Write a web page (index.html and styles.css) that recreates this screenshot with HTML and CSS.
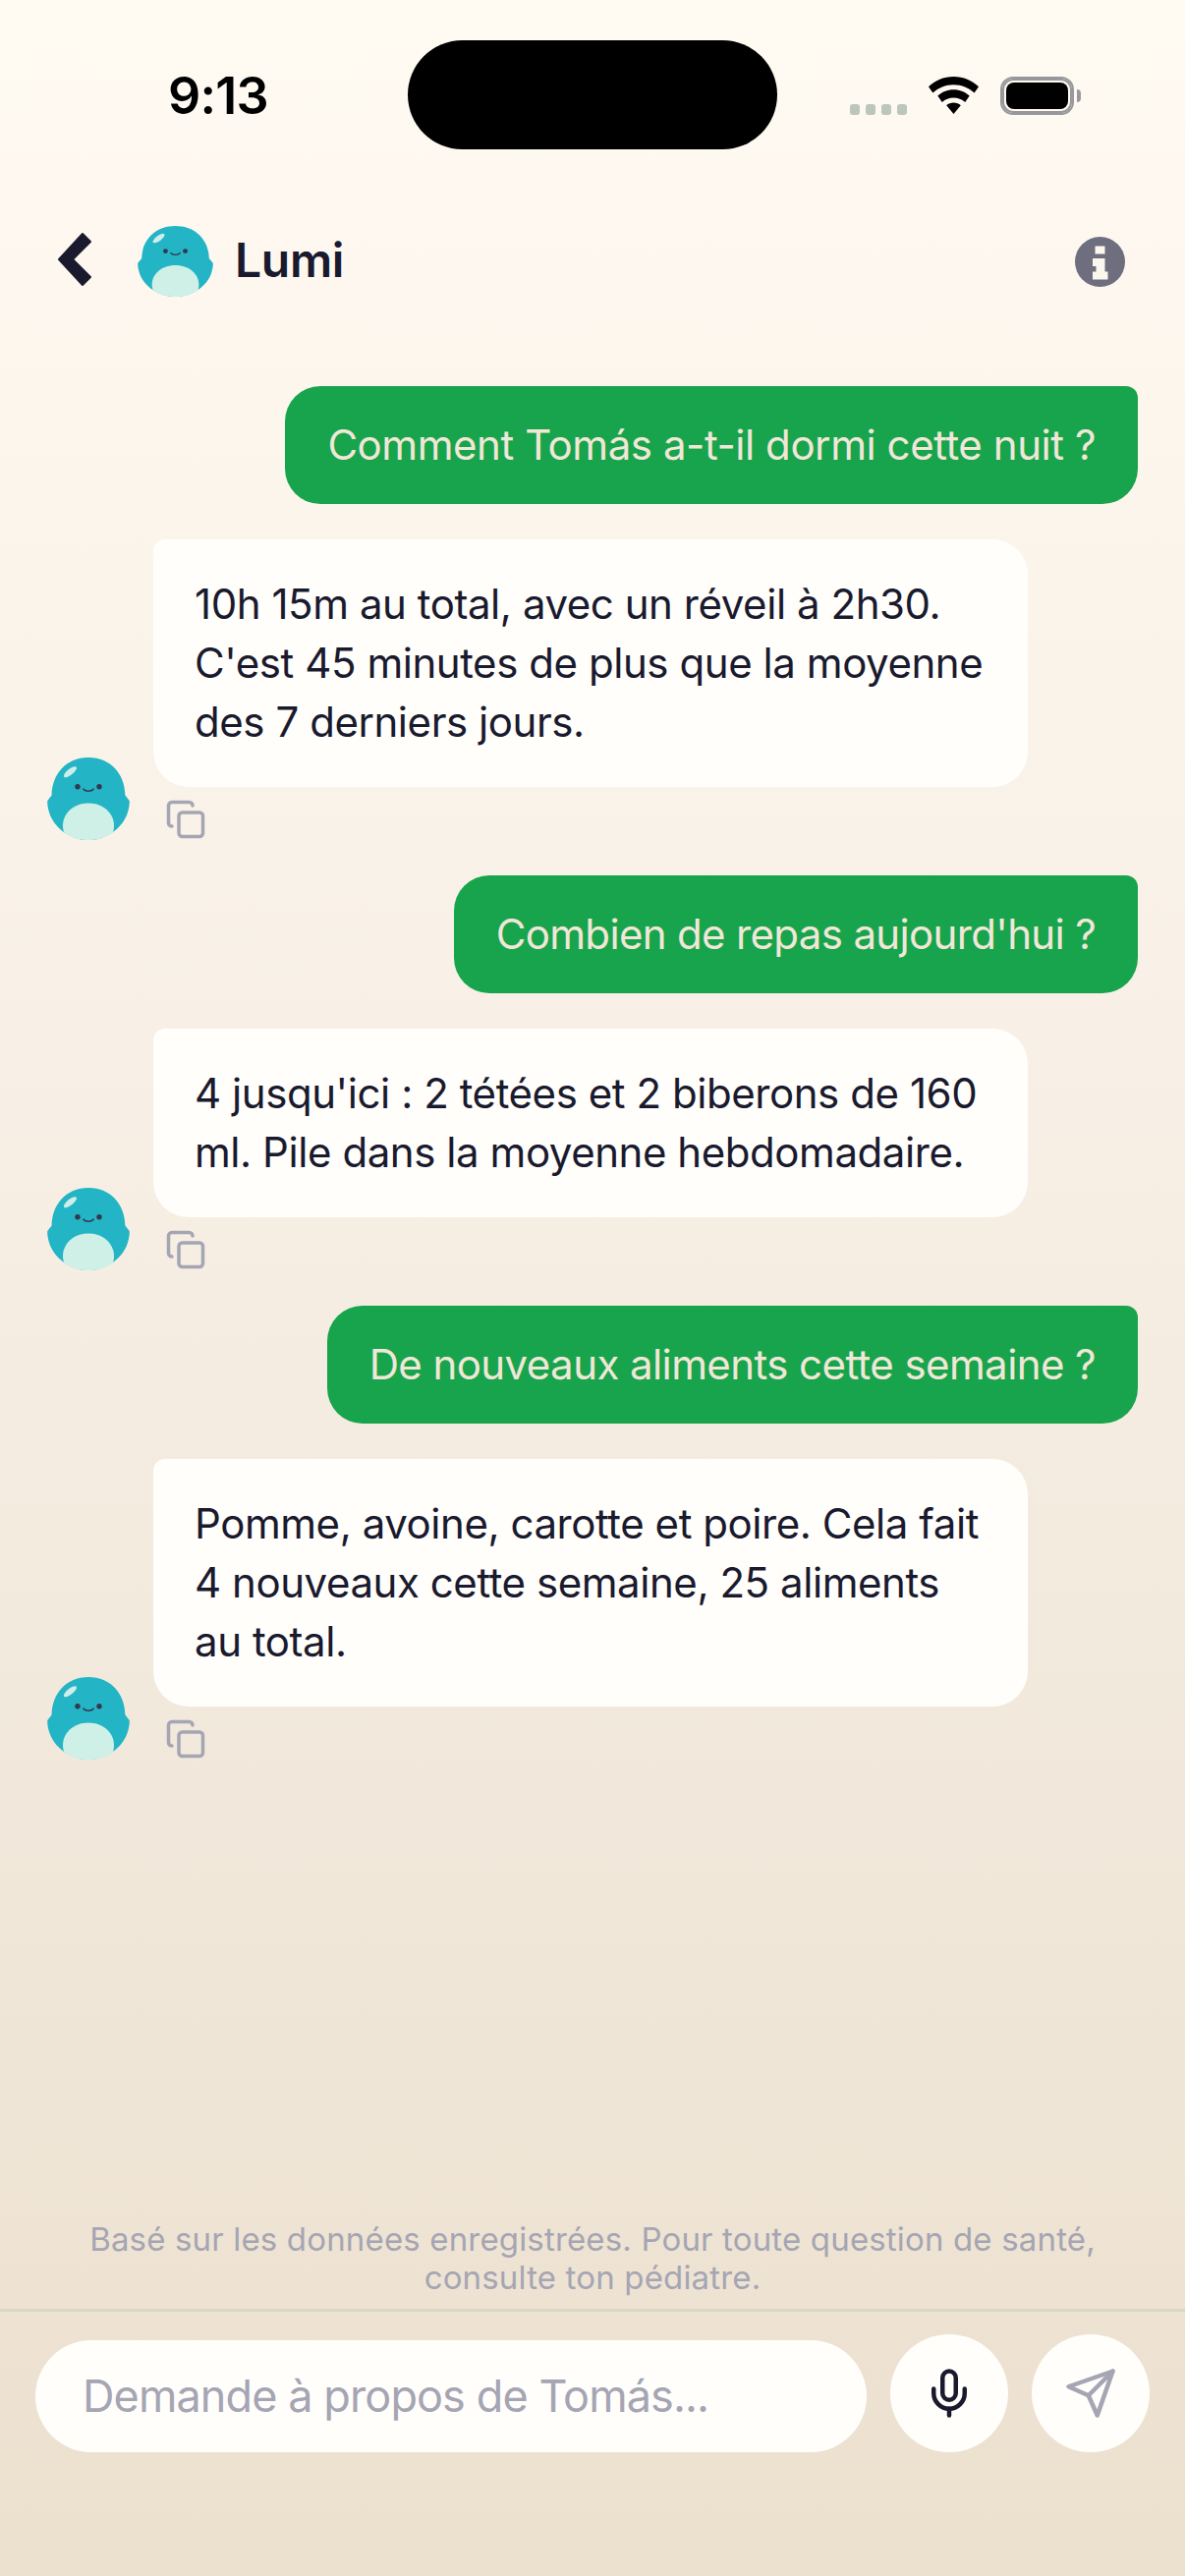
FILE: index.html
```html
<!DOCTYPE html>
<html lang="fr">
<head>
<meta charset="utf-8">
<title>Lumi</title>
<link rel="stylesheet" href="styles.css">
</head>
<body>
<svg class="defs" width="0" height="0" aria-hidden="true">
  <defs>
    <symbol id="lumi" viewBox="0 0 84 83" preserveAspectRatio="none">
      <path class="m-body" d="M42 0C19 0 5 17 4.600 38L.3 43.500C0 46 .500 50 2 55 6 69 22 83 42 83S78 69 82 55C83.500 50 84 46 83.700 43.500L79.400 38C79 17 65 0 42 0Z"/>
      <path class="m-belly" d="M42 46C26 46 16 57 16 68.500 16 71 16.400 73.500 17.300 75.500 23.500 80.500 32 83 42 83S60.500 80.500 67 75.500C67.700 73.500 68 71 68 68.500 68 57 58 46 42 46Z"/>
      <ellipse class="m-shine" cx="23.500" cy="14.500" rx="8" ry="3" transform="rotate(-38 23.500 14.500)"/>
      <circle class="m-eye" cx="31" cy="29.500" r="2.700"/>
      <circle class="m-eye" cx="53" cy="29.500" r="2.700"/>
      <path class="m-smile" d="M37 31.800C39 34.500 45 34.500 47 31.800"/>
    </symbol>
    <symbol id="copy" viewBox="0 0 24 24">
      <rect x="8" y="8" width="14" height="14" rx="2"/>
      <path d="M4 16c-1.100 0-2-.9-2-2V4c0-1.100.9-2 2-2h10c1.100 0 2 .9 2 2"/>
    </symbol>
  </defs>
</svg>

<div class="screen">
  <div class="status">
    <div class="time">9:13</div>
    <div class="island"></div>
    <div class="status-icons">
      <div class="dots"><i></i><i></i><i></i><i></i></div>
      <svg class="wifi" viewBox="0 0 51 38"><path d="M25.500 0C15.500 0 6.700 3.800 0 10.200L4.400 16.500C10 11.300 17.300 8.200 25.500 8.200S41 11.300 46.600 16.500L51 10.200C44.300 3.800 35.500 0 25.500 0Z"/><path d="M25.500 13.300C19.200 13.300 13.600 15.600 9.300 19.600L13.800 26C16.900 23.200 21 21.500 25.500 21.500S34.100 23.200 37.200 26L41.700 19.600C37.400 15.600 31.800 13.300 25.500 13.300Z"/><path d="M25.500 26.500C22.700 26.500 20.100 27.500 18.200 29.300L25.500 38 32.800 29.300C30.900 27.500 28.300 26.500 25.500 26.500Z"/></svg>
      <div class="battery"><div class="battery-fill"></div></div>
      <div class="battery-nub"></div>
    </div>
  </div>

  <header class="header">
    <svg class="back" viewBox="0 0 36 56"><path d="M26 2 34 10 16 28 34 46 26 54 2 28Z"/></svg>
    <svg class="head-avatar"><use href="#lumi"/></svg>
    <div class="name">Lumi</div>
    <svg class="info" viewBox="0 0 51 51"><circle class="info-disc" cx="25.500" cy="25.500" r="25.500"/><path class="info-i" d="M20.500 9.500H30.500V17.500H20.500ZM18 22H30.500V35.500H33.500V43.500H18V35.500H21.500V30H18Z"/></svg>
  </header>

  <main class="chat">
    <div class="user">Comment Tomás a-t-il dormi cette nuit ?</div>
    <div class="ai-row">
      <svg class="avatar"><use href="#lumi"/></svg>
      <div class="ai-col">
        <div class="ai">10h 15m au total, avec un réveil à 2h30. C'est 45 minutes de plus que la moyenne des 7 derniers jours.</div>
        <svg class="copy"><use href="#copy"/></svg>
      </div>
    </div>
    <div class="user user-tight">Combien de repas aujourd'hui ?</div>
    <div class="ai-row">
      <svg class="avatar"><use href="#lumi"/></svg>
      <div class="ai-col">
        <div class="ai">4 jusqu'ici : 2 tétées et 2 biberons de 160 ml. Pile dans la moyenne hebdomadaire.</div>
        <svg class="copy"><use href="#copy"/></svg>
      </div>
    </div>
    <div class="user user-snug">De nouveaux aliments cette semaine ?</div>
    <div class="ai-row">
      <svg class="avatar"><use href="#lumi"/></svg>
      <div class="ai-col">
        <div class="ai">Pomme, avoine, carotte et poire. Cela fait 4 nouveaux cette semaine, 25 aliments au total.</div>
        <svg class="copy"><use href="#copy"/></svg>
      </div>
    </div>
  </main>

  <p class="disclaimer">Basé sur les données enregistrées. Pour toute question de santé,<br>consulte ton pédiatre.</p>

  <footer class="composer">
    <div class="input">Demande à propos de Tomás...</div>
    <div class="round">
      <svg class="ico ico-mic" viewBox="0 0 24 24"><path d="M12 2a3 3 0 0 0-3 3v7a3 3 0 0 0 6 0V5a3 3 0 0 0-3-3Z"/><path d="M19 10v2a7 7 0 0 1-14 0v-2"/><path d="M12 19v3"/></svg>
    </div>
    <div class="round">
      <svg class="ico ico-send" viewBox="0 0 24 24"><path d="m22 2-7 20-4-9-9-4Z"/><path d="M22 2 11 13"/></svg>
    </div>
  </footer>
</div>
</body>
</html>
```

FILE: styles.css
```css
* { box-sizing: border-box; }
html, body { margin: 0; padding: 0; }
body { font-family: Inter, "Noto Sans", sans-serif; color: #1a1a2e; }
.defs { position: absolute; }

.screen {
  width: 1206px;
  height: 2622px;
  display: flex;
  flex-direction: column;
  background: linear-gradient(180deg, #fffaf2 0%, #f8f0e6 40%, #f1e8db 70%, #ece0ce 100%);
  overflow: hidden;
}

/* status bar */
.status {
  display: flex;
  align-items: flex-start;
  height: 204px;
  padding: 41px 0 0 171px;
}
.time {
  width: 244px;
  margin-top: 26px;
  font-size: 52px;
  line-height: 62px;
  font-weight: 600;
  color: #000;
  letter-spacing: -.8px;
}
.island {
  width: 376px;
  height: 111px;
  border-radius: 56px;
  background: #000;
}
.status-icons {
  display: flex;
  align-items: flex-start;
  margin-left: 74px;
  margin-top: 37px;
}
.dots { display: flex; gap: 6px; margin-top: 28px; }
.dots i { width: 10px; height: 11px; border-radius: 3px; background: #bcc6bb; }
.wifi { width: 51px; height: 38px; margin-left: 22px; }
.wifi path { fill: #000; }
.battery {
  width: 75px;
  height: 39px;
  margin-left: 22px;
  padding: 4px;
  border: 2px solid #98989c;
  border-radius: 13px;
  box-shadow: inset 0 0 0 2px #98989c;
}
.battery-fill { width: 100%; height: 100%; border-radius: 8px; background: #000; }
.battery-nub { width: 4px; height: 13px; margin: 13px 0 0 3px; border-radius: 0 6px 6px 0; background: #98989c; }

/* header */
.header {
  display: flex;
  align-items: center;
  height: 122px;
  padding: 0 61px 0 58px;
}
.back { width: 36px; height: 56px; margin-top: -2px; }
.back path { fill: #1a1a2e; stroke: #1a1a2e; stroke-width: 2; stroke-linejoin: round; }
.head-avatar { width: 77px; height: 72px; margin-left: 46px; margin-top: 2px; }
.name { margin-left: 22px; font-size: 48px; line-height: 56px; font-weight: 600; letter-spacing: -.3px; color: #1a1a2e; }
.info { width: 51px; height: 51px; margin-left: auto; margin-top: 2px; }
.info-disc { fill: #6e6e7e; }
.info-i { fill: #fbf6ee; }

/* mascot */
.m-body { fill: #23b5c5; }
.m-belly { fill: #cff0e7; }
.m-shine { fill: #cdeeea; }
.m-eye { fill: #33384f; }
.m-smile { fill: none; stroke: #33384f; stroke-width: 1.600; stroke-linecap: round; }

/* chat */
.chat {
  flex: 1;
  display: flex;
  flex-direction: column;
  gap: 36px;
  padding: 67px 48px 0;
}
.user {
  align-self: flex-end;
  padding: 30px 43px;
  font-size: 42px;
  line-height: 60px;
  letter-spacing: -.44px;
  color: #f1e7d8;
  background: #18a44c;
  border-radius: 36px 12px 36px 36px;
}
.user-tight { letter-spacing: -.66px; }
.user-snug { letter-spacing: -.58px; }
.ai-row { display: flex; align-items: flex-end; gap: 24px; }
.avatar { width: 84px; height: 84px; flex: none; }
.ai-col { display: flex; flex-direction: column; align-items: flex-start; gap: 12px; }
.ai {
  width: 890px;
  padding: 36px 42px;
  font-size: 42px;
  line-height: 60px;
  letter-spacing: -.44px;
  color: #1a1a2e;
  background: #fffefb;
  border-radius: 12px 36px 36px 36px;
}
.copy {
  width: 42px;
  height: 42px;
  margin-left: 12px;
  fill: none;
  stroke: #a5a5b3;
  stroke-width: 2;
  stroke-linecap: round;
  stroke-linejoin: round;
}

/* footer */
.disclaimer {
  margin: 0;
  padding: 0 0 12px;
  text-align: center;
  font-size: 33px;
  line-height: 39px;
  letter-spacing: .16px;
  color: #a5a5b3;
}
.composer {
  display: flex;
  align-items: flex-end;
  gap: 24px;
  height: 272px;
  padding: 24px 36px 126px;
  border-top: 3px solid #d9d5ca;
}
.input {
  flex: 1;
  height: 114px;
  padding: 0 48px;
  border-radius: 57px;
  background: #fffefb;
  font-size: 45px;
  line-height: 114px;
  letter-spacing: -.9px;
  color: #a5a5b3;
}
.round {
  width: 120px;
  height: 120px;
  flex: none;
  display: flex;
  align-items: center;
  justify-content: center;
  border-radius: 50%;
  background: #fffefb;
}
.ico {
  width: 54px;
  height: 54px;
  fill: none;
  stroke-width: 2;
  stroke-linecap: round;
  stroke-linejoin: round;
}
.ico-mic { stroke: #1a1a2e; }
.ico-send { stroke: #a5a5b3; }
```
